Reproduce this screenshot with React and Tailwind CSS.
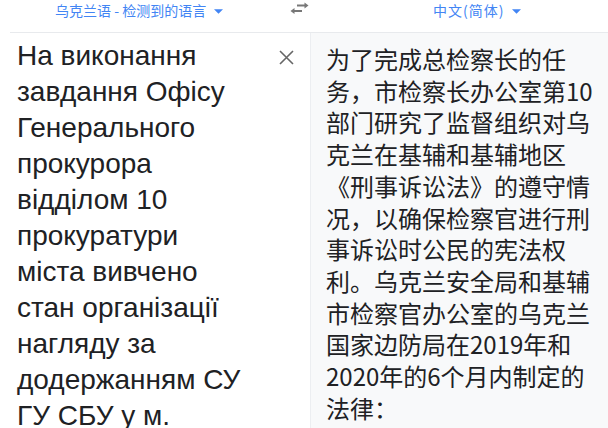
import React from 'react';

const ukText =
  'На виконання завдання Офісу Генерального прокурора відділом 10 прокуратури міста вивчено стан організації нагляду за додержанням СУ ГУ СБУ у м. Києві';

const zhText =
  '为了完成总检察长的任务，市检察长办公室第10部门研究了监督组织对乌克兰在基辅和基辅地区《刑事诉讼法》的遵守情况，以确保检察官进行刑事诉讼时公民的宪法权利。乌克兰安全局和基辅市检察官办公室的乌克兰国家边防局在2019年和2020年的6个月内制定的法律：';

const Caret = () => (
  <svg width="9" height="5" viewBox="0 0 10 5" className="ml-[8px] mt-[2px]">
    <path d="M0 0 L10 0 L5 5 Z" fill="#4285f4" />
  </svg>
);

export default function App() {
  return (
    <div className="w-[608px] h-[428px] overflow-hidden bg-white font-['Liberation_Sans','Noto_Sans_CJK_SC',sans-serif]">
      {/* language bar */}
      <div className="flex h-[32px] items-start">
        <div className="w-[290px] flex items-center pl-[55px] pt-[1px] text-[14px] text-[#4285f4] leading-[18px]">
          <span className="font-['Noto_Sans_CJK_SC',sans-serif]">乌克兰语 - 检测到的语言</span>
          <Caret />
        </div>
        <div className="w-[29px] flex pt-[2px]">
          <svg width="19" height="12" viewBox="0 0 19 12">
            <path d="M7 3.5 H15" stroke="#777" strokeWidth="2" />
            <path d="M14.5 0.5 L18.5 3.5 L14.5 6.5 Z" fill="#777" />
            <path d="M4 9 H12" stroke="#777" strokeWidth="2" />
            <path d="M4.5 6 L0.5 9 L4.5 12 Z" fill="#777" />
          </svg>
        </div>
        <div className="flex-1 flex items-center pl-[114px] pt-[1px] text-[14px] text-[#4285f4] leading-[18px]">
          <span className="font-['Noto_Sans_CJK_SC',sans-serif] tracking-[1px]">中文(简体)</span>
          <Caret />
        </div>
      </div>

      {/* panes */}
      <div className="flex h-[396px] border-t border-[#e8eaed] ml-[10px]">
        <div className="w-[300px] flex pl-[7px] pt-[5px]">
          <div className="w-[225px] text-[28px] leading-[36px] text-[#202124]">{ukText}</div>
          <button className="ml-[36px] mt-[12px] h-[16px] w-[16px] flex items-start justify-center">
            <svg width="15" height="15" viewBox="0 0 15 15">
              <path d="M1 1 L14 14 M14 1 L1 14" stroke="#666" strokeWidth="1.6" />
            </svg>
          </button>
        </div>
        <div className="flex-1 bg-[#f8f9fa] border-l border-[#eceef1] pl-[15px] pt-[10px]">
          <div className="w-[270px] text-[24px] leading-[31.7px] text-[#202124] font-['Noto_Sans_CJK_SC',sans-serif]">
            {zhText}
          </div>
        </div>
      </div>
    </div>
  );
}
